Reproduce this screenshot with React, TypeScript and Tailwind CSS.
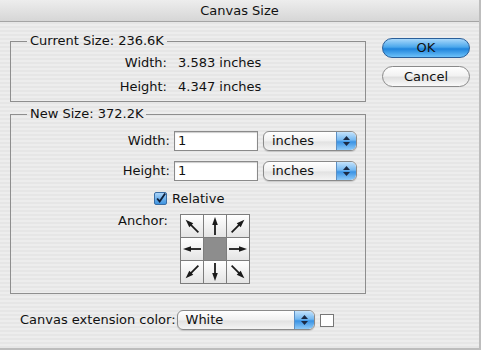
import type { ReactNode } from 'react'

const font = { fontFamily: '"Lucida Grande", "DejaVu Sans", sans-serif' }

function Stepper() {
  return (
    <div className="w-[20px] h-full rounded-r-[5px] border-l border-[#5b8fc4] bg-[linear-gradient(to_bottom,#c4e3fc,#74b8f1_45%,#3a93e4_55%,#8fcaf8)] flex flex-col items-center justify-center gap-[2px]">
      <svg width="7" height="4" viewBox="0 0 7 4"><path d="M3.5 0 L7 4 L0 4 Z" fill="#1b2a44" /></svg>
      <svg width="7" height="4" viewBox="0 0 7 4"><path d="M0 0 L7 0 L3.5 4 Z" fill="#1b2a44" /></svg>
    </div>
  )
}

function Select({ value, width }: { value: string; width: string }) {
  return (
    <div className={`${width} h-[20px] flex rounded-[6px] border border-[#8a8a8a] bg-[linear-gradient(to_bottom,#ffffff,#f0f0f0_50%,#e2e2e2_55%,#f4f4f4)] shadow-[0_1px_1px_rgba(0,0,0,0.15)] overflow-hidden`}>
      <div className="flex-1 pl-[8px] text-[13px] leading-[18px] text-[#111]">{value}</div>
      <Stepper />
    </div>
  )
}

function Group({ title, children, className }: { title: string; children: ReactNode; className?: string }) {
  return (
    <fieldset className={`border border-[#8e8e8e] px-0 ${className ?? ''}`}>
      <legend className="ml-[16px] px-[3px] text-[13px] leading-[16px] text-[#111]">{title}</legend>
      {children}
    </fieldset>
  )
}

// base arrow points up, rotated per cell
function Arrow({ deg }: { deg: number }) {
  return (
    <svg width="20" height="20" viewBox="0 0 20 20" className="overflow-visible" style={{ transform: `rotate(${deg}deg)` }}>
      <line x1="10" y1="19" x2="10" y2="7" stroke="#1a1a1a" strokeWidth="1.8" />
      <path d="M10 1 L12.8 9 L7.2 9 Z" fill="#1a1a1a" />
    </svg>
  )
}

function AnchorGrid() {
  const cells = [-45, 0, 45, -90, null, 90, -135, 180, 135]
  return (
    <div className="grid grid-cols-3 w-[70px] h-[70px] border border-[#7d7d7d] bg-[#7d7d7d] gap-px">
      {cells.map((d, i) =>
        d === null ? (
          <div key={i} className="bg-[#8d8d8d]" />
        ) : (
          <div key={i} className="flex items-center justify-center bg-[linear-gradient(to_bottom,#ffffff,#e4e4e4)]">
            <Arrow deg={d} />
          </div>
        )
      )}
    </div>
  )
}

export default function App() {
  return (
    <div
      className="w-[481px] h-[350px] flex flex-col text-[#111] border-r-2 border-b-2 border-[#bdbdbd] bg-[repeating-linear-gradient(to_bottom,#ededed_0px,#ededed_2px,#e6e6e6_2px,#e6e6e6_4px)]"
      style={font}
    >
      {/* title bar */}
      <div className="h-[22px] shrink-0 flex items-center justify-center border-b border-[#a5a5a5] bg-[linear-gradient(to_bottom,#ededed,#d6d6d6)] text-[13px]">
        Canvas Size
      </div>

      <div className="flex pl-[10px] pt-[11px]">
        <div className="w-[356px] flex flex-col">
          <Group title="Current Size: 236.6K" className="h-[69px]">
            <div className="flex flex-col gap-[8px] pt-[6px] text-[13px] leading-[16px]">
              {[['Width:', '3.583 inches'], ['Height:', '4.347 inches']].map(([l, v]) => (
                <div key={l} className="flex">
                  <div className="w-[156px] text-right">{l}</div>
                  <div className="ml-[11px]">{v}</div>
                </div>
              ))}
            </div>
          </Group>

          <Group title="New Size: 372.2K" className="h-[188px] mt-[4px]">
            <div className="flex flex-col pt-[9px]">
              {['Width:', 'Height:'].map((l, i) => (
                <div key={l} className={`flex items-center ${i ? 'mt-[10px]' : ''}`}>
                  <div className="w-[163px] text-right text-[13px] pr-[4px]">{l}</div>
                  <div className="w-[84px] h-[20px] border border-[#8a8a8a] bg-white shadow-[inset_0_1px_1px_rgba(0,0,0,0.2)] text-[13px] leading-[18px] pl-[3px]">1</div>
                  <div className="ml-[5px]"><Select value="inches" width="w-[94px]" /></div>
                </div>
              ))}
              <div className="flex items-center ml-[143px] mt-[8px]">
                <div className="w-[13px] h-[13px] rounded-[2px] border border-[#3a6ea5] bg-[linear-gradient(to_bottom,#a9d3f8,#3e94e0)] flex items-center justify-center">
                  <svg width="13" height="13" viewBox="0 0 13 13"><path d="M2.5 6.5 L5.5 10 L12 0.5" fill="none" stroke="#10203a" strokeWidth="2.2" /></svg>
                </div>
                <span className="ml-[5px] text-[13px]">Relative</span>
              </div>
              <div className="flex items-start mt-[5px]">
                <div className="w-[157px] text-right text-[13px] leading-[16px] mt-[-1px]">Anchor:</div>
                <div className="ml-[12px]"><AnchorGrid /></div>
              </div>
            </div>
          </Group>

          <div className="flex items-center mt-[16px] ml-[10px]">
            <span className="text-[13px]">Canvas extension color:</span>
            <div className="ml-[1px]"><Select value="White" width="w-[138px]" /></div>
            <div className="ml-[5px] w-[14px] h-[13px] border border-[#777] bg-white" />
          </div>
        </div>

        <div className="flex flex-col ml-[16px] pt-[5px] gap-[8px]">
          <button className="w-[88px] h-[20px] rounded-full border border-[#2b5f99] bg-[linear-gradient(to_bottom,#a8d8fb,#4aa7ec_45%,#1f84dc_55%,#6cc1f9)] text-[13px] leading-[18px] text-[#111]">
            OK
          </button>
          <button className="w-[88px] h-[21px] rounded-full border border-[#8a8a8a] bg-[linear-gradient(to_bottom,#ffffff,#f2f2f2_45%,#e0e0e0_55%,#fafafa)] text-[13px] leading-[19px] text-[#111]">
            Cancel
          </button>
        </div>
      </div>
    </div>
  )
}
